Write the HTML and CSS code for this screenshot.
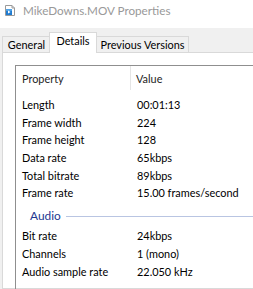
FILE: index.html
```html
<!DOCTYPE html>
<html>
<head>
  <meta charset="UTF-8">
  <title>MikeDowns.MOV Properties</title>
  <link rel="stylesheet" href="styles.css">
</head>
<body>
<div class="window">
  <div class="titlebar">
    <svg class="file-icon" width="10" height="11" viewBox="0 0 10 11">
      <path d="M0.5 0.5 H7 L9.5 3 V10.5 H0.5 Z" fill="#fff" stroke="#9a9a9a"/>
      <path d="M7 0.5 V3 H9.5" fill="none" stroke="#9a9a9a"/>
      <rect x="1" y="4" width="6" height="6" fill="#1f7bd0"/>
      <rect x="1" y="4" width="6" height="2" fill="#4fa3e8"/>
      <path d="M3 5.5 L5.6 7 L3 8.5 Z" fill="#fff"/>
    </svg>
    <span class="title">MikeDowns.MOV Properties</span>
  </div>

  <div class="tabs">
    <div class="tab tab-general">General</div>
    <div class="tab tab-details active">Details</div>
    <div class="tab tab-prev">Previous Versions</div>
  </div>

  <div class="panel">
    <div class="listview">
      <div class="list-head">
        <div class="col-name">Property</div>
        <div class="col-value">Value</div>
      </div>
      <div class="list-body">
        <div class="row"><div class="col-name">Length</div><div class="col-value">00:01:13</div></div>
        <div class="row"><div class="col-name">Frame width</div><div class="col-value">224</div></div>
        <div class="row"><div class="col-name">Frame height</div><div class="col-value">128</div></div>
        <div class="row"><div class="col-name">Data rate</div><div class="col-value">65kbps</div></div>
        <div class="row"><div class="col-name">Total bitrate</div><div class="col-value">89kbps</div></div>
        <div class="row"><div class="col-name">Frame rate</div><div class="col-value">15.00 frames/second</div></div>
        <div class="group">Audio</div>
        <div class="row"><div class="col-name">Bit rate</div><div class="col-value">24kbps</div></div>
        <div class="row"><div class="col-name">Channels</div><div class="col-value">1 (mono)</div></div>
        <div class="row"><div class="col-name">Audio sample rate</div><div class="col-value">22.050 kHz</div></div>
      </div>
    </div>
  </div>
</div>
</body>
</html>
```
FILE: styles.css
```css
body {
  margin: 0;
  font-family: Lato, "Open Sans", sans-serif;
  font-size: 10.9px;
  color: #000;
}

.window {
  width: 253px;
  height: 289px;
  background: #f0f0f0;
  overflow: hidden;
  display: flex;
  flex-direction: column;
}

.titlebar {
  height: 20px;
  padding-bottom: 8px;
  background: #fff;
  display: flex;
  align-items: center;
}

.file-icon {
  margin-left: 5px;
  margin-right: 8px;
  flex: none;
}

.title {
  font-size: 11.7px;
  color: #999;
}

.tabs {
  margin-top: 4px;
  height: 20px;
  padding-left: 2px;
  display: flex;
  align-items: flex-end;
  position: relative;
  z-index: 1;
}

.tab {
  height: 15px;
  line-height: 15px;
  border: 1px solid #d9d9d9;
  border-bottom: none;
  background: #f0f0f0;
  text-align: center;
  white-space: nowrap;
}

.tab-general {
  width: 47px;
}

.tab-details {
  width: 46px;
  margin-left: -2px;
}

.tab-prev {
  width: 91px;
  margin-left: -1px;
}

.tab.active {
  height: 20px;
  line-height: 16px;
  margin-bottom: -1px;
  background: #fff;
  position: relative;
}

.panel {
  flex: 1;
  width: 300px;
  margin-left: 2px;
  background: #fff;
  border: 1px solid #d9d9d9;
  padding: 12px 0 0 12px;
}

.listview {
  height: 100%;
  border-top: 1px solid #8f8f8f;
  border-left: 1px solid #8f8f8f;
}

.list-head {
  height: 25px;
  display: flex;
  align-items: center;
  color: #1e1e1e;
}

.list-head .col-name {
  border-right: 1px solid #e5e5e5;
  height: 24px;
  line-height: 25px;
  align-self: flex-start;
}

.list-body {
  padding-top: 5px;
}

.row {
  height: 17.7px;
  line-height: 17.7px;
  display: flex;
  white-space: nowrap;
}

.col-name {
  width: 109px;
  padding-left: 6px;
}

.list-head .col-name {
  width: 108px;
}

.col-value {
  padding-left: 5px;
}

.row .col-name {
  padding-right: 1px;
}

.group {
  height: 20px;
  line-height: 20px;
  padding: 4px 0 1.3px 14px;
  display: flex;
  align-items: center;
  font-size: 11.9px;
  color: #1e3991;
}

.group::after {
  content: "";
  flex: 1;
  height: 1px;
  margin-left: 5px;
  background: #b9c5e2;
}
```
